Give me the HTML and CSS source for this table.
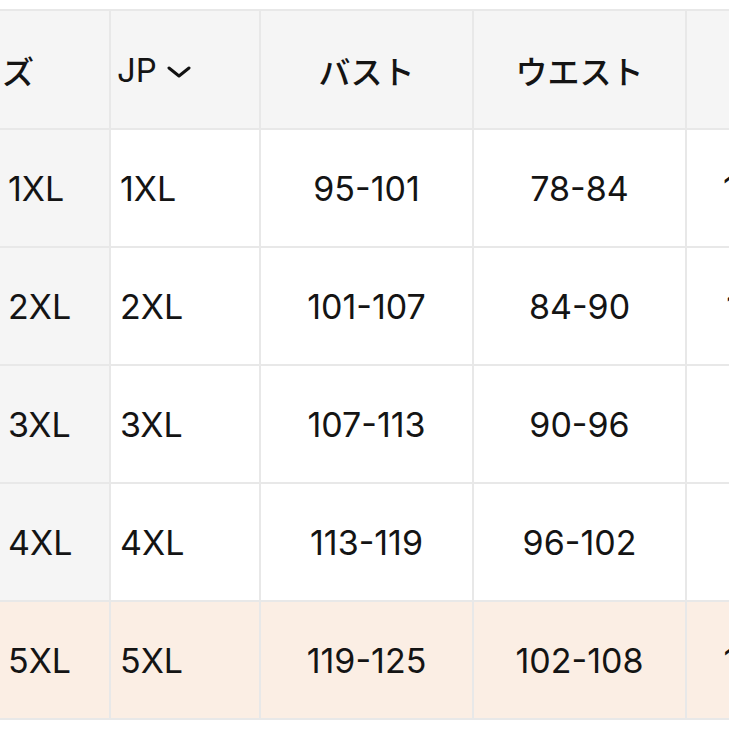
FILE: index.html
```html
<!DOCTYPE html>
<html lang="ja">
<head>
<meta charset="utf-8">
<title>サイズ表</title>
<link rel="stylesheet" href="styles.css">
</head>
<body>
<div class="viewport">
  <div class="table">
    <div class="cell head first"><span>サイズ</span></div>
    <div class="cell head left"><span class="latin">JP</span><svg class="chev" width="24" height="12" viewBox="0 0 24 12"><path d="M2 2 L12 10 L22 2" fill="none" stroke="#111" stroke-width="3" stroke-linecap="round" stroke-linejoin="round"/></svg></div>
    <div class="cell head">バスト</div>
    <div class="cell head">ウエスト</div>
    <div class="cell head">ヒップ</div>

    <div class="cell side">1XL</div>
    <div class="cell left">1XL</div>
    <div class="cell">95-101</div>
    <div class="cell">78-84</div>
    <div class="cell">102-108</div>

    <div class="cell side">2XL</div>
    <div class="cell left">2XL</div>
    <div class="cell">101-107</div>
    <div class="cell">84-90</div>
    <div class="cell">108-114</div>

    <div class="cell side">3XL</div>
    <div class="cell left">3XL</div>
    <div class="cell">107-113</div>
    <div class="cell">90-96</div>
    <div class="cell">114-117</div>

    <div class="cell side">4XL</div>
    <div class="cell left">4XL</div>
    <div class="cell">113-119</div>
    <div class="cell">96-102</div>
    <div class="cell">117-121</div>

    <div class="cell side hl">5XL</div>
    <div class="cell left hl">5XL</div>
    <div class="cell hl">119-125</div>
    <div class="cell hl">102-108</div>
    <div class="cell hl">126-132</div>
  </div>
</div>
</body>
</html>
```

FILE: styles.css
```css
html, body {
  margin: 0;
  padding: 0;
  background: #ffffff;
}
body {
  font-family: Inter, "Noto Sans CJK JP", sans-serif;
  color: #141414;
}
.viewport {
  width: 729px;
  height: 729px;
  overflow: hidden;
  padding-top: 9px;
  box-sizing: border-box;
}
.table {
  display: grid;
  grid-template-columns: 109px 148px 211px 211px 200px;
  grid-template-rows: 117px 116px 116px 116px 116px 116px;
  gap: 2px;
  padding: 2px 0;
  width: max-content;
  background: #e8e8e8;
}
.cell {
  background: #ffffff;
  display: flex;
  align-items: center;
  justify-content: center;
  font-size: 34px;
  white-space: nowrap;
  overflow: hidden;
}
.head {
  background: #f5f5f5;
  font-family: "Noto Sans CJK JP", sans-serif;
  font-size: 32px;
  font-weight: 500;
}
.latin {
  font-family: Inter, sans-serif;
  font-size: 33px;
  font-weight: 400;
}
.left {
  justify-content: flex-start;
  padding-left: 9px;
}
.side {
  background: #f5f5f5;
  justify-content: flex-start;
  padding-left: 8px;
}
.head.left {
  padding-left: 6px;
}
.first {
  justify-content: flex-end;
  padding-right: 75px;
}
.chev {
  margin-left: 10px;
  margin-top: 4px;
}
.hl {
  background: #fbeee4;
}
```
